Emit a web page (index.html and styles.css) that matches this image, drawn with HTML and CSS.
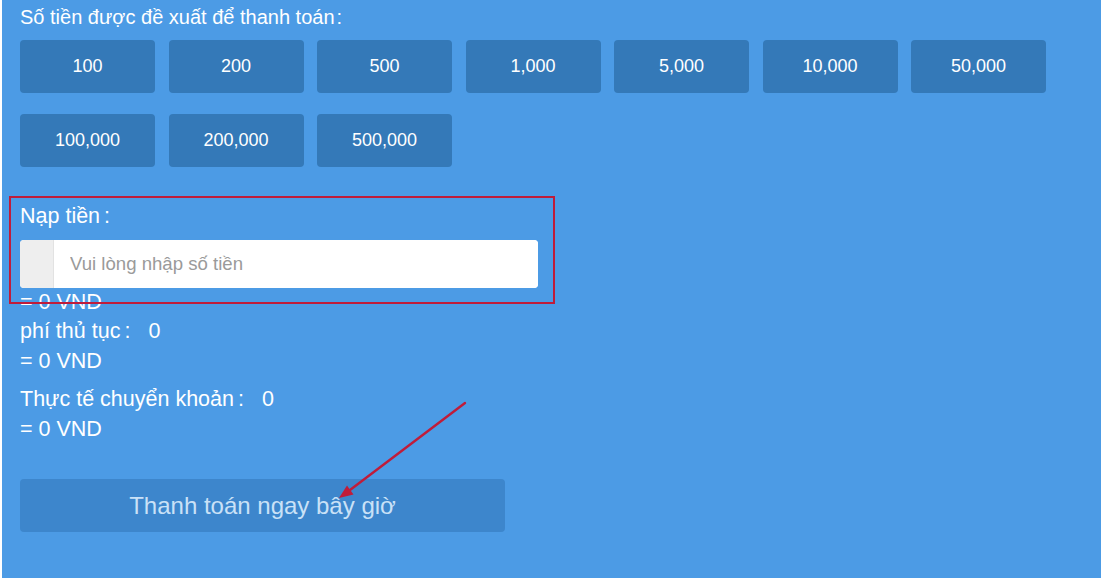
FILE: index.html
```html
<!DOCTYPE html>
<html lang="vi">
<head>
<meta charset="utf-8">
<title>Nạp tiền</title>
<link rel="stylesheet" href="styles.css">
</head>
<body>
<div class="page">
  <div class="title">Số tiền được đề xuất để thanh toán<span class="colon tight">:</span></div>
  <div class="amounts">
    <button class="amount">100</button>
    <button class="amount">200</button>
    <button class="amount">500</button>
    <button class="amount">1,000</button>
    <button class="amount">5,000</button>
    <button class="amount">10,000</button>
    <button class="amount">50,000</button>
    <button class="amount">100,000</button>
    <button class="amount">200,000</button>
    <button class="amount">500,000</button>
  </div>
  <div class="deposit">
    <div class="label">Nạp tiền<span class="colon">:</span></div>
    <div class="input-group">
      <span class="addon"></span>
      <input class="field" type="text" placeholder="Vui lòng nhập số tiền">
    </div>
    <div class="line first">= 0 VND</div>
  </div>
  <div class="block">
    <div class="line">phí thủ tục<span class="colon">:</span><span class="value">0</span></div>
    <div class="line">= 0 VND</div>
  </div>
  <div class="block gap">
    <div class="line">Thực tế chuyển khoản<span class="colon">:</span><span class="value">0</span></div>
    <div class="line">= 0 VND</div>
  </div>
  <button class="submit">Thanh toán ngay bây giờ</button>

  <div class="highlight"></div>
  <svg class="arrow" width="1099" height="578" viewBox="0 0 1099 578">
    <line x1="463" y1="403" x2="348" y2="490" stroke="#c01c3a" stroke-width="2.4" stroke-linecap="round"/>
    <polygon points="337,498 351.5,494.5 345,485.5" fill="#c01c3a"/>
  </svg>
</div>
</body>
</html>
```

FILE: styles.css
```css
html, body {
  margin: 0;
  padding: 0;
  background: #ffffff;
}

body {
  font-family: "Liberation Sans", Arial, sans-serif;
  color: #ffffff;
}

.page {
  position: relative;
  box-sizing: border-box;
  height: 578px;
  margin: 0 4px 0 2px;
  padding: 2px 18px 0;
  background: #4c9be5;
  overflow: hidden;
}

.title {
  font-size: 20px;
  line-height: 30px;
}

.colon {
  margin-left: 4px;
}

.colon.tight {
  margin-left: 2px;
}

.value {
  margin-left: 18px;
}

.amounts {
  display: flex;
  flex-wrap: wrap;
  gap: 21px 13.5px;
  margin-top: 8px;
  width: 1045px;
}

.amount {
  width: 135px;
  height: 53px;
  border: none;
  border-radius: 4px;
  background: #3479b8;
  color: #ffffff;
  font-family: "Liberation Sans", Arial, sans-serif;
  font-size: 18px;
  padding: 0;
  cursor: pointer;
}

.label {
  margin-top: 34px;
  margin-bottom: 9px;
  font-size: 21.5px;
  line-height: 30px;
}

.input-group {
  display: flex;
  width: 518px;
  height: 48px;
  border-radius: 4px;
  overflow: hidden;
  background: #ffffff;
}

.addon {
  width: 33px;
  background: #eeeeee;
  border-right: 1px solid #e2e2e2;
}

.field {
  flex: 1;
  border: none;
  outline: none;
  padding: 0 0 0 16px;
  font-family: "Liberation Sans", Arial, sans-serif;
  font-size: 18.6px;
  color: #555555;
  background: #ffffff;
}

.field::placeholder {
  color: #9a9a9a;
}

.line {
  font-size: 21.5px;
  line-height: 30px;
}

.line.first {
  line-height: 28px;
}

.block.gap {
  margin-top: 8px;
}

.submit {
  display: block;
  margin-top: 35px;
  width: 485px;
  height: 53px;
  border: none;
  border-radius: 4px;
  background: #3d86cc;
  color: #c9e1f7;
  font-family: "Liberation Sans", Arial, sans-serif;
  font-size: 24px;
  padding: 0;
}

.highlight {
  position: absolute;
  left: 7px;
  top: 196px;
  width: 546px;
  height: 108px;
  box-sizing: border-box;
  border: 2.5px solid #c01c3a;
}

.arrow {
  position: absolute;
  left: 0;
  top: 0;
  pointer-events: none;
}
```
